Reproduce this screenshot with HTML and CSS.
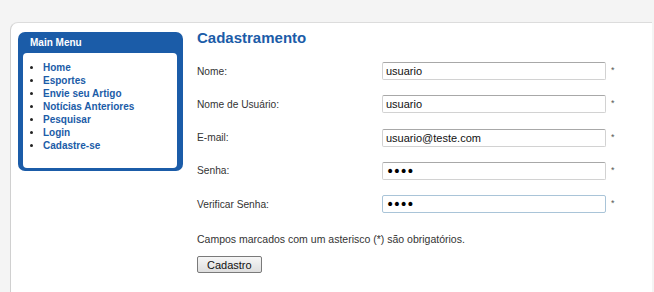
FILE: index.html
```html
<!DOCTYPE html>
<html lang="pt">
<head>
  <meta charset="UTF-8">
  <title>Cadastramento</title>
  <link rel="stylesheet" href="styles.css">
</head>
<body>
  <div class="page">
    <div class="sidebar">
      <div class="menu">
        <h3>Main Menu</h3>
        <ul>
          <li><a href="#">Home</a></li>
          <li><a href="#">Esportes</a></li>
          <li><a href="#">Envie seu Artigo</a></li>
          <li><a href="#">Notícias Anteriores</a></li>
          <li><a href="#">Pesquisar</a></li>
          <li><a href="#">Login</a></li>
          <li><a href="#">Cadastre-se</a></li>
        </ul>
      </div>
    </div>

    <div class="main">
      <h1>Cadastramento</h1>
      <form class="form">
        <div class="row">
          <label for="nome">Nome:</label>
          <input type="text" id="nome" value="usuario">
          <span class="req">*</span>
        </div>
        <div class="row">
          <label for="usuario">Nome de Usuário:</label>
          <input type="text" id="usuario" value="usuario">
          <span class="req">*</span>
        </div>
        <div class="row">
          <label for="email">E-mail:</label>
          <input type="text" id="email" value="usuario@teste.com">
          <span class="req">*</span>
        </div>
        <div class="row">
          <label for="senha">Senha:</label>
          <input type="password" id="senha" value="1234">
          <span class="req">*</span>
        </div>
        <div class="row">
          <label for="senha2">Verificar Senha:</label>
          <input type="password" id="senha2" value="1234" class="active" autofocus>
          <span class="req">*</span>
        </div>
        <p class="note">Campos marcados com um asterisco (*) são obrigatórios.</p>
        <button type="button">Cadastro</button>
      </form>
    </div>
  </div>
</body>
</html>
```

FILE: styles.css
```css
:root {
  --blue: #1b5ca8;
  --text: #333;
}
* {
  margin: 0;
  padding: 0;
  box-sizing: border-box;
}
body {
  font-family: 'Liberation Sans', Arial, sans-serif;
  background-color: #f4f4f4;
  color: var(--text);
  padding: 22px 2px 0 10px;
  height: 292px;
  overflow: hidden;
}

.page {
  background: #fff;
  border-top: 1px solid #dcdcdc;
  border-left: 1px solid #d0d0d0;
  border-radius: 8px 0 0 0;
  height: 270px;
  display: flex;
  padding: 6px 0 0 7px;
}

/* Left menu */
.sidebar {
  width: 165px;
  padding-top: 3px;
}
.menu {
  background: var(--blue);
  border-radius: 7px;
  padding: 0 6px 3px 5px;
}
.menu h3 {
  color: #fff;
  font-size: 10px;
  font-weight: bold;
  line-height: 21px;
  padding-left: 7px;
}
.menu ul {
  background: #fff;
  border-radius: 4px;
  padding: 8px 0 16px 20px;
  list-style: disc;
  color: #222;
}
.menu li {
  font-size: 10px;
  line-height: 13px;
}
.menu a {
  color: var(--blue);
  font-weight: bold;
  text-decoration: none;
}

/* Form area */
.main {
  margin-left: 14px;
}
.main h1 {
  color: var(--blue);
  font-size: 15px;
  font-weight: bold;
  line-height: 18px;
  margin-bottom: 15px;
}
.form {
  display: flex;
  flex-direction: column;
}
.row {
  display: flex;
  align-items: center;
  height: 18px;
  margin-bottom: 15.3px;
}
.row label {
  width: 185px;
  font-size: 10.2px;
}
.row input {
  width: 224px;
  height: 18px;
  border: 1px solid #d2d2d2;
  border-top-color: #a8a8a8;
  border-radius: 2px;
  padding: 0 3px;
  font-family: 'Liberation Sans', Arial, sans-serif;
  font-size: 11px;
  color: #111;
  outline: none;
}
.row input[type="password"] {
  font-family: 'DejaVu Sans', sans-serif;
  font-size: 14px;
  letter-spacing: -1.5px;
  color: #000;
}
.row input.active {
  border-color: #a9c4d8;
}
.req {
  font-size: 9px;
  color: #555;
  margin-left: 5px;
  position: relative;
  top: -1px;
}
.note {
  font-size: 10.5px;
  line-height: 14px;
  margin-top: 4px;
}
button {
  align-self: flex-start;
  margin-top: 10px;
  height: 17px;
  padding: 0 9px;
  font-family: 'Liberation Sans', Arial, sans-serif;
  font-size: 11px;
  color: #111;
  background: linear-gradient(#f6f6f6, #dedede);
  border: 1px solid #7a7a7a;
  border-radius: 2px;
}
```
